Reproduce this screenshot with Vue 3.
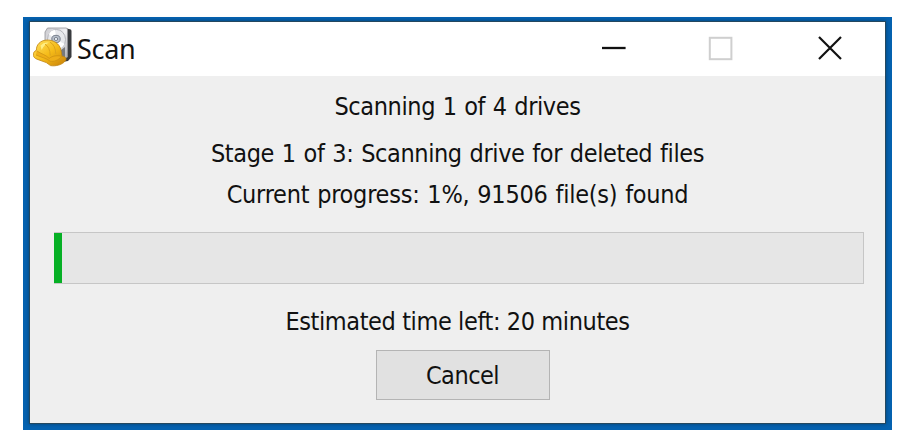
<script setup>
const lines = [
  { key: 'drives', text: 'Scanning 1 of 4 drives' },
  { key: 'stage', text: 'Stage 1 of 3: Scanning drive for deleted files' },
  { key: 'found', text: 'Current progress: 1%, 91506 file(s) found' },
]
const progress = 1
</script>

<template>
  <main class="desktop">
    <section class="window">
      <header class="titlebar">
        <svg class="app-icon" width="41" height="41" viewBox="0 0 41 41">
          <defs>
            <linearGradient id="metal" x1="0" y1="0" x2="1" y2="1">
              <stop offset="0" stop-color="#c9c9ce" />
              <stop offset=".5" stop-color="#f0f0f3" />
              <stop offset="1" stop-color="#a5a5aa" />
            </linearGradient>
            <linearGradient id="helmet" x1="0" y1="0" x2="1" y2="1">
              <stop offset="0" stop-color="#ffe263" />
              <stop offset=".5" stop-color="#f5bb18" />
              <stop offset="1" stop-color="#c77f08" />
            </linearGradient>
          </defs>
          <path d="M34 1.5 37 2.2Q38.5 2.5 38.5 4V30L35 34 29 35Z" fill="#393b3f" />
          <path d="M14.5 1H33Q34.5 1 34.5 3V30L27 34 12 28V5Z" fill="url(#metal)" stroke="#929297" stroke-width=".8" />
          <ellipse cx="23.5" cy="12.5" rx="9" ry="10" fill="#e7e8ec" stroke="#b4b5bb" />
          <path d="M23.5 12.5 15.8 7.3Q18 3 22 3ZM24 13 31.5 17Q29 22 24.5 22Z" fill="#fff" />
          <ellipse cx="23" cy="12" rx="4.2" ry="3.7" fill="#b7bfcb" stroke="#777f8c" />
          <ellipse cx="23" cy="12" rx="1.7" ry="1.5" fill="#eef3fa" stroke="#59616c" stroke-width=".7" />
          <path d="M28 23 32 20V31L28 32Z" fill="#77797d" />
          <path d="M.4 28.5C0 26 1.2 24.2 3.4 23.2 3.2 17.6 7.4 13.6 13.1 13.1 20 12.4 27 16.6 28 23.5L29 29.3C32.4 29.5 34 31.5 32.4 33.8 29.8 37.6 22.5 39.6 17.5 38.6L13.3 35.6 4 32.2C1.8 31.3.7 30.2.4 28.5Z" fill="url(#helmet)" stroke="#c08410" stroke-width=".8" />
          <path d="M3.8 23.8C8 27 12.5 27.5 16.2 31.4 19 29 24 28 28.6 29.4 25 33.3 21 35 17.2 34.2 14 31.3 8 30.3 3 28" fill="#eeae18" stroke="#c58a12" stroke-width=".6" />
          <path d="M7.5 18.5Q11 14.8 16 15.8 11 17.5 8.6 23Z" fill="#ffee84" />
          <path d="M17 15.2Q22.5 18 22.8 27M12 17.2Q17 20 17.2 28.5" fill="none" stroke="#dda41c" stroke-width="1" />
        </svg>
        <h1 class="title">Scan</h1>
        <svg class="controls" width="230" height="30" viewBox="0 0 230 30" fill="none">
          <path d="M2 15H25.6" stroke="#111" stroke-width="2.3" />
          <rect x="109.8" y="4.8" width="21.6" height="21.4" stroke="#cfcfcf" stroke-width="2" />
          <path d="M219 4 241 26M241 4 219 26" stroke="#111" stroke-width="2.2" />
        </svg>
      </header>
      <div class="body">
        <p v-for="line in lines" :key="line.key" class="line" :class="line.key">{{ line.text }}</p>
        <div class="track"><div class="fill" :style="{ width: progress + '%' }"></div></div>
        <p class="line estimate">Estimated time left: 20 minutes</p>
        <button class="cancel" type="button">Cancel</button>
      </div>
    </section>
  </main>
</template>

<style>
body {
  margin: 0;
  background: #fff;
}
</style>

<style scoped>
.desktop {
  box-sizing: border-box;
  width: 869px;
  height: 413px;
  margin: 17px 0 0 23px;
  padding: 5px 7px 7px;
  background: #0562b0;
}
.window {
  height: 401px;
  background: #efefef;
  box-shadow: 0 0 0 1px #24485f, 0 0 4px 1px #06406f;
}
.titlebar {
  display: flex;
  box-sizing: border-box;
  height: 54px;
  padding: 5px 0 0 3px;
  background: #fff;
}
.title {
  margin: 0 0 0 3px;
  font: 400 27px/43px "Noto Sans", sans-serif;
  letter-spacing: -0.3px;
  color: #111;
}
.controls {
  margin: 6px 55px 0 auto;
  overflow: visible;
}
.body {
  display: flex;
  flex-direction: column;
  align-items: center;
  padding-top: 15px;
}
.line {
  margin: 0;
  font: 25px/32px "DejaVu Sans Condensed", "DejaVu Sans", sans-serif;
  font-stretch: condensed;
  letter-spacing: -0.4px;
  white-space: nowrap;
  color: #111;
}
.drives {
  word-spacing: 0.9px;
}
.stage {
  margin-top: 15px;
  word-spacing: 1.1px;
}
.found {
  margin-top: 9px;
  letter-spacing: -0.25px;
  word-spacing: 1px;
}
.track {
  box-sizing: border-box;
  width: 810px;
  height: 52px;
  margin: 21px 0 0 3px;
  border: 1.5px solid #c6c6c6;
  border-left: 0;
  background: #e6e6e6;
}
.fill {
  height: 50px;
  background: #06b025;
}
.estimate {
  margin-top: 22px;
}
.cancel {
  box-sizing: border-box;
  width: 174px;
  height: 50px;
  margin: 12px 0 0 10px;
  padding: 2px 0 0;
  border: 1.5px solid #b4b4b4;
  background: #e1e1e1;
  font: 25px/46px "DejaVu Sans Condensed", "DejaVu Sans", sans-serif;
  font-stretch: condensed;
  letter-spacing: -0.5px;
  color: #111;
}
</style>
